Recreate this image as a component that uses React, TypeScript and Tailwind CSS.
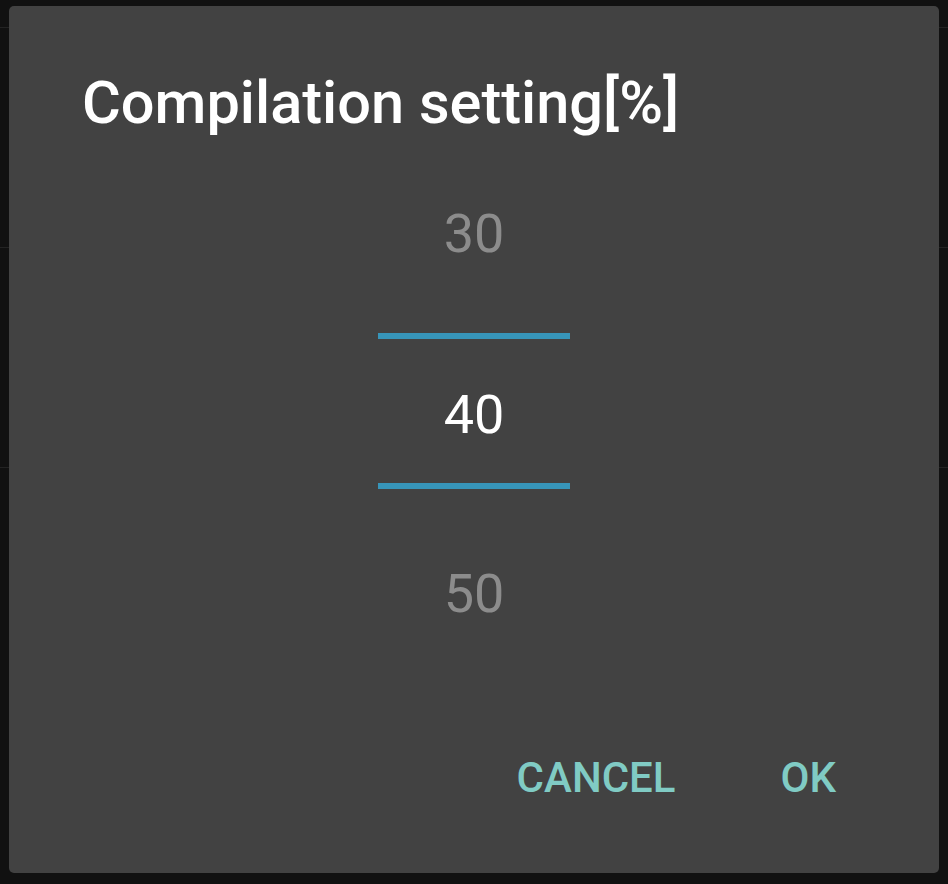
const font = { fontFamily: "Roboto, 'Noto Sans', sans-serif" };

const PickerValue = ({ value, active }: { value: number; active?: boolean }) => (
  <p
    className={`text-[54px] leading-[54px] ${active ? "text-white" : "text-[#8c8c8c]"}`}
  >
    {value}
  </p>
);

const Divider = () => <div className="h-[6px] w-[192px] bg-[#3795b9]" />;

const App = () => {
  return (
    <div className="relative h-[884px] w-full overflow-hidden bg-[#111111]" style={font}>
      {/* list behind the dialog */}
      <div className="flex flex-col">
        <div className="h-[28px] border-b border-[#232323]" />
        <div className="h-[220px] border-b border-[#232323]" />
        <div className="h-[220px] border-b border-[#232323]" />
      </div>

      <div className="absolute left-[9px] top-[6px] flex h-[867px] w-[930px] flex-col rounded-[5px] bg-[#424242]">
        <h1 className="pl-[73px] pt-[67px] text-[59.5px] font-medium leading-[60px] text-white">
          Compilation setting[%]
        </h1>

        <div className="flex flex-col items-center">
          <div className="mt-[74px]">
            <PickerValue value={30} />
          </div>
          <div className="mt-[72px]">
            <Divider />
          </div>
          <div className="mt-[49px]">
            <PickerValue value={40} active />
          </div>
          <div className="mt-[41px]">
            <Divider />
          </div>
          <div className="mt-[78px]">
            <PickerValue value={50} />
          </div>
        </div>

        <div className="mt-[136px] flex justify-end gap-[105px] pr-[103px] text-[42px] font-medium leading-[42px] text-[#80cbc4]">
          <span>CANCEL</span>
          <span>OK</span>
        </div>
      </div>
    </div>
  );
};

export default App;
